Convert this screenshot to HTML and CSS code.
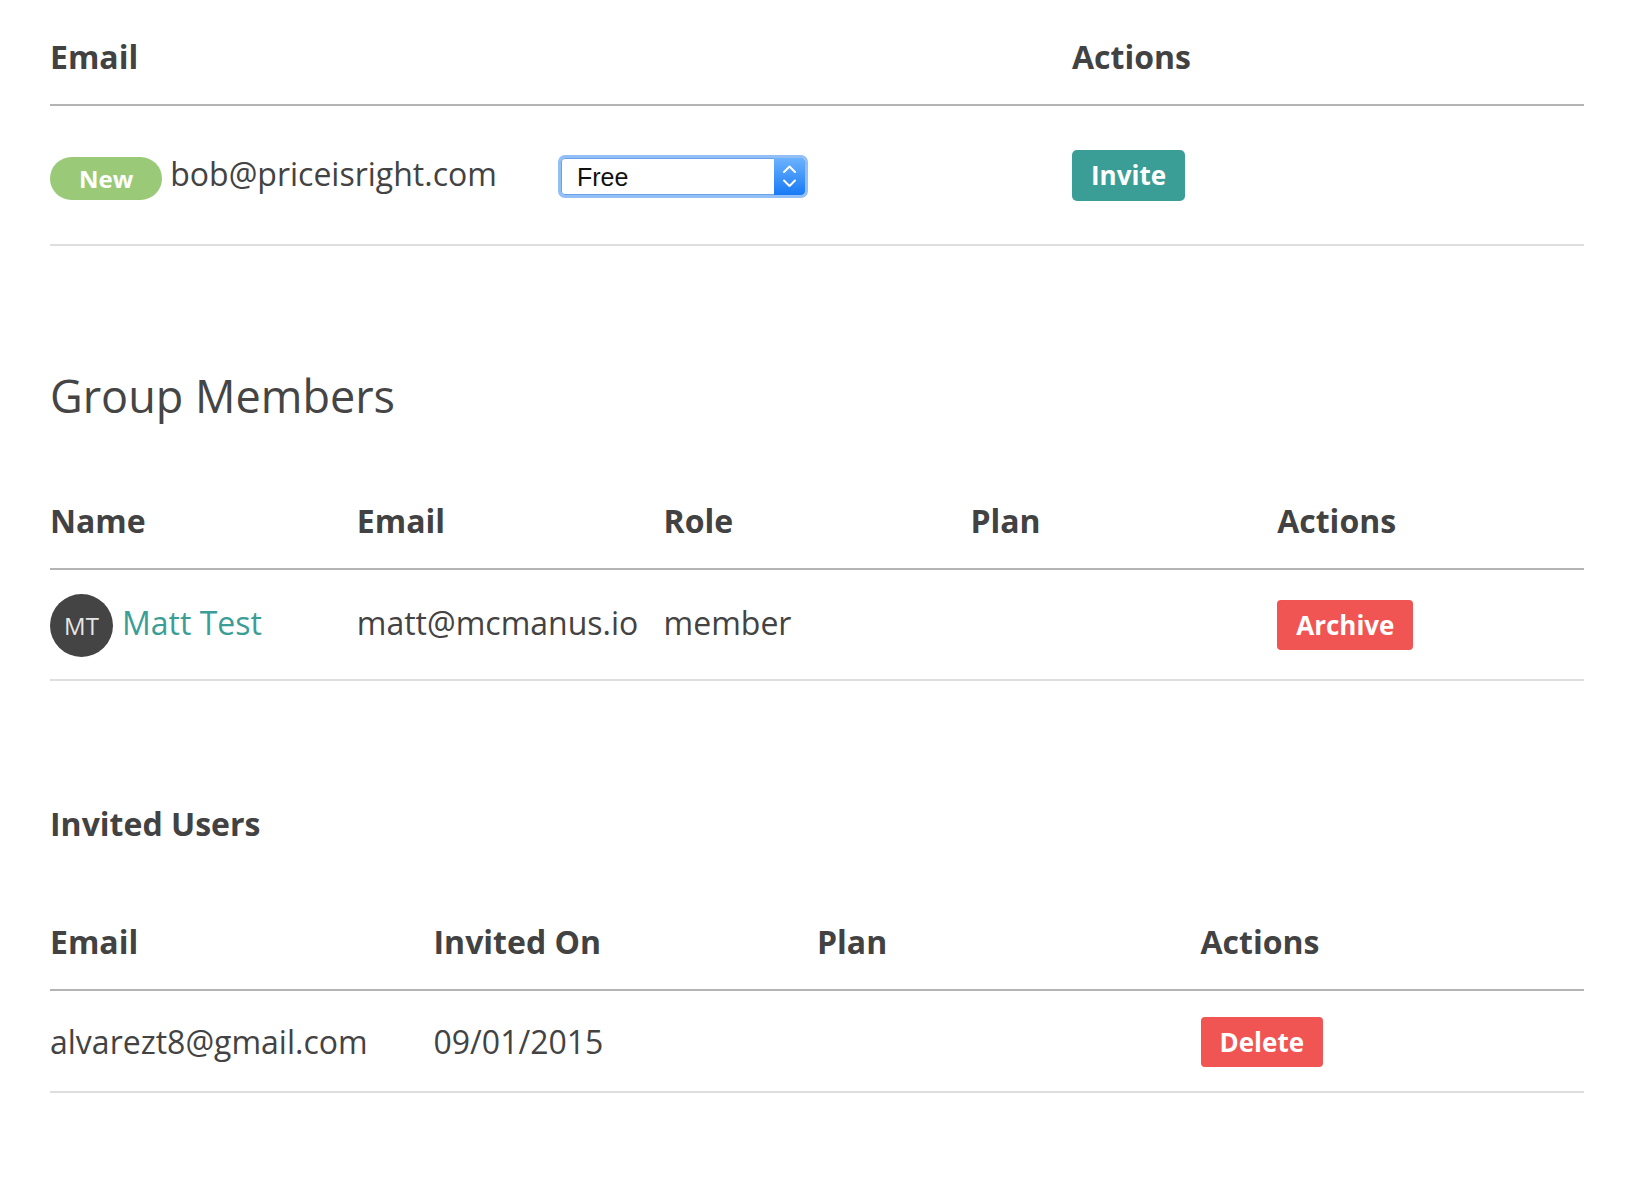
FILE: index.html
```html
<!DOCTYPE html>
<html lang="en">
<head>
<meta charset="utf-8">
<title>Group Members</title>
<link rel="stylesheet" href="styles.css">
</head>
<body>
<main class="page">
  <table class="tbl tbl-new">
    <colgroup><col class="c-new-email"><col class="c-new-plan"><col class="c-new-actions"></colgroup>
    <thead>
      <tr><th>Email</th><th></th><th>Actions</th></tr>
    </thead>
    <tbody>
      <tr>
        <td class="nowrap"><span class="badge">New</span>bob@priceisright.com</td>
        <td>
          <span class="select">
            <span class="select-value">Free</span>
            <span class="select-stepper">
              <svg width="31" height="37" viewBox="0 0 31 37"><path d="M10 14 L15.5 8.5 L21 14" fill="none" stroke="#fff" stroke-width="2" stroke-linecap="round" stroke-linejoin="round"/><path d="M10 22.5 L15.5 28 L21 22.5" fill="none" stroke="#fff" stroke-width="2" stroke-linecap="round" stroke-linejoin="round"/></svg>
            </span>
          </span>
        </td>
        <td><button class="btn btn-teal">Invite</button></td>
      </tr>
    </tbody>
  </table>

  <h2 class="section-title">Group Members</h2>
  <table class="tbl tbl-members">
    <thead>
      <tr><th>Name</th><th>Email</th><th>Role</th><th>Plan</th><th>Actions</th></tr>
    </thead>
    <tbody>
      <tr>
        <td class="nowrap"><span class="avatar">MT</span><a class="name-link" href="#">Matt Test</a></td>
        <td>matt@mcmanus.io</td>
        <td>member</td>
        <td></td>
        <td><button class="btn btn-red">Archive</button></td>
      </tr>
    </tbody>
  </table>

  <h3 class="sub-title">Invited Users</h3>
  <table class="tbl tbl-invited">
    <thead>
      <tr><th>Email</th><th>Invited On</th><th>Plan</th><th>Actions</th></tr>
    </thead>
    <tbody>
      <tr>
        <td>alvarezt8@gmail.com</td>
        <td>09/01/2015</td>
        <td></td>
        <td><button class="btn btn-red">Delete</button></td>
      </tr>
    </tbody>
  </table>
</main>
</body>
</html>
```
FILE: styles.css
```css
html, body {
  margin: 0;
  padding: 0;
  background: #fff;
}

body {
  font-family: "Open Sans", "DejaVu Sans", sans-serif;
  color: #434343;
  font-size: 32px;
}

.page {
  padding: 33px 42px 40px 50px;
}

.tbl {
  width: 100%;
  table-layout: fixed;
  border-collapse: separate;
  border-spacing: 0;
}

.tbl th {
  text-align: left;
  font-weight: 700;
  font-size: 32px;
  line-height: 44px;
  padding: 2px 0 25px 0;
  border-bottom: 2px solid #b4b4b4;
  vertical-align: bottom;
  color: #424242;
}

.tbl td {
  font-size: 32px;
  line-height: 44px;
  padding: 0;
  border-bottom: 2px solid #dedede;
  vertical-align: baseline;
  white-space: nowrap;
}

.nowrap { white-space: nowrap; }

.c-new-email { width: 508px; }
.c-new-plan { width: 514px; }

.tbl-new { margin-bottom: 118px; }
.tbl-new td { padding: 44px 0 43px; }
.tbl-new .btn { vertical-align: 1px; height: 51px; line-height: 51px; }

.tbl-members { margin-bottom: 119px; }
.tbl-members td { padding: 24px 0 22px; }

.tbl-invited td { padding: 26px 0 24px; }
.tbl-invited .btn { vertical-align: 2px; }

.section-title {
  margin: 0 0 71px;
  padding-top: 2px;
  font-size: 45px;
  line-height: 60px;
  font-weight: 400;
  color: #454545;
}

.sub-title {
  margin: 0 0 72px;
  padding-top: 2px;
  font-size: 32px;
  line-height: 44px;
  font-weight: 700;
  color: #424242;
}

.badge {
  display: inline-block;
  height: 43px;
  line-height: 43px;
  padding: 0 29px;
  border-radius: 22px;
  background: #9aca77;
  color: #fff;
  font-size: 24px;
  font-weight: 700;
  margin-right: 8px;
  vertical-align: -2px;
}

.select {
  display: inline-flex;
  width: 250px;
  height: 43px;
  box-sizing: border-box;
  border: 3px solid #92bff5;
  border-radius: 7px;
  background: #fff;
  box-shadow: inset 0 0 0 1px #6aa2ea;
  overflow: hidden;
}

.select-value {
  flex: 1;
  padding-left: 16px;
  padding-top: 1px;
  font-family: "Liberation Sans", Arial, sans-serif;
  font-size: 25px;
  line-height: 36px;
  color: #111;
}

.select-stepper {
  display: flex;
  width: 31px;
  background: linear-gradient(#6cb2ff, #187af5);
  border-radius: 0 4px 4px 0;
}

.btn {
  display: inline-block;
  height: 50px;
  line-height: 50px;
  padding: 0 19px;
  border: 0;
  border-radius: 5px;
  font-family: "Open Sans", "DejaVu Sans", sans-serif;
  font-size: 26px;
  font-weight: 700;
  color: #fff;
  cursor: pointer;
  vertical-align: baseline;
}

.btn-teal { background: #3b9e96; }
.btn-red { background: #f05453; border-radius: 4px; }

.avatar {
  display: inline-block;
  width: 63px;
  height: 63px;
  line-height: 63px;
  border-radius: 50%;
  background: #444;
  color: #e6e6e6;
  font-size: 24px;
  text-align: center;
  margin-right: 9px;
}

.name-link {
  color: #3b9e96;
  text-decoration: none;
}
```
